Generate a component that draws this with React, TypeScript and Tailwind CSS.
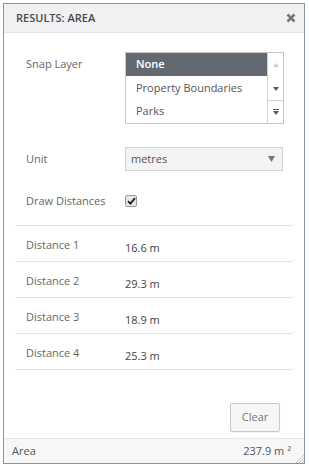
import React from "react";

const font = { fontFamily: '"Open Sans", "Noto Sans", sans-serif' };

function Close() {
  return (
    <svg width="10" height="10" viewBox="0 0 10 10">
      <path d="M1.5 1.5 L8.5 8.5 M8.5 1.5 L1.5 8.5" stroke="#777" strokeWidth="2.6" strokeLinecap="butt" />
    </svg>
  );
}

export default function App() {
  const rows = [
    ["Distance 1", "16.6 m"],
    ["Distance 2", "29.3 m"],
    ["Distance 3", "18.9 m"],
    ["Distance 4", "25.3 m"],
  ];
  return (
    <div className="w-[309px] h-[468px] bg-white p-[3px]" style={font}>
      <div className="w-[302px] h-[461px] border border-[#8595a4] flex flex-col bg-white">
        {/* header */}
        <div className="h-[29px] shrink-0 bg-[#f0f1f3] border-b border-[#e2e4e7] flex items-center justify-between pl-[12px] pr-[8px]">
          <span className="text-[11px] font-semibold text-[#4a4a4a]">RESULTS: AREA</span>
          <Close />
        </div>
        {/* body */}
        <div className="flex-1 flex flex-col pt-[19px]">
          {/* snap layer */}
          <div className="flex pl-[22px]">
            <div className="w-[99px] h-[24px] flex items-center text-[11px] text-[#666]">Snap Layer</div>
            <div className="w-[159px] h-[72px] border border-[#c6c6c6] flex">
              <div className="flex-1 flex flex-col text-[11px]">
                <div className="h-[24px] bg-[#636970] text-white font-semibold flex items-center pl-[10px]">None</div>
                <div className="h-[24px] text-[#555] flex items-center pl-[10px]">Property Boundaries</div>
                <div className="h-[24px] text-[#555] flex items-center pl-[10px]">Parks</div>
              </div>
              <div className="w-[16px] border-l border-[#d0d0d0] flex flex-col">
                <div className="h-[24px] flex items-center justify-center">
                  <svg width="6" height="4" viewBox="0 0 6 4"><path d="M0 4 L3 0 L6 4Z" fill="#cfcfcf" /></svg>
                </div>
                <div className="h-[24px] flex items-center justify-center border-b border-[#d0d0d0]">
                  <svg width="6" height="4" viewBox="0 0 6 4"><path d="M0 0 L6 0 L3 4Z" fill="#555" /></svg>
                </div>
                <div className="flex-1 flex items-center justify-center">
                  <svg width="6" height="6" viewBox="0 0 6 6"><path d="M0 0 H6 V1 H0Z M0 2 L6 2 L3 6Z" fill="#555" /></svg>
                </div>
              </div>
            </div>
          </div>
          {/* unit */}
          <div className="flex pl-[22px] mt-[23px]">
            <div className="w-[99px] h-[24px] flex items-center text-[11px] text-[#666]">Unit</div>
            <div className="w-[158px] h-[24px] border border-[#d3d3d3] bg-[#f3f3f3] flex items-center justify-between pl-[5px] pr-[7px]">
              <span className="text-[11px] text-[#555]">metres</span>
              <svg width="7" height="6" viewBox="0 0 7 6"><path d="M0 0 L7 0 L3.5 6Z" fill="#777" /></svg>
            </div>
          </div>
          {/* draw distances */}
          <div className="flex pl-[22px] mt-[18px] items-center h-[24px]">
            <div className="w-[99px] text-[11px] text-[#666]">Draw Distances</div>
            <div className="w-[12px] h-[12px] border border-[#9a9a9a] rounded-[2px] bg-[#e6e6e6] flex items-center justify-center">
              <svg width="9" height="8" viewBox="0 0 9 8"><path d="M1 4.2 L3.4 6.6 L8 1.2" stroke="#222" strokeWidth="1.8" fill="none" /></svg>
            </div>
          </div>
          {/* distances */}
          <div className="mx-[11px] mt-[12px] border-t border-[#e4e4e4]">
            {rows.map(([l, v]) => (
              <div key={l} className="h-[36px] border-b border-[#e4e4e4] flex pl-[11px] text-[11px]">
                <div className="w-[99px] pt-[11px] text-[#666]">{l}</div>
                <div className="pt-[14px] text-[#444]">{v}</div>
              </div>
            ))}
          </div>
          <div className="flex-1" />
          <div className="flex justify-end pr-[24px] pb-[6px]">
            <div className="w-[50px] h-[29px] border border-[#c9c9c9] rounded-[2px] bg-[#f6f6f6] shadow-[0_1px_1px_rgba(0,0,0,0.05)] flex items-center justify-center text-[11px] text-[#777]">Clear</div>
          </div>
        </div>
        {/* footer */}
        <div className="h-[25px] shrink-0 border-t border-[#e6e6e6] bg-[#f7f7f7] flex items-center justify-between pl-[8px] pr-[13px] relative text-[11px] text-[#555]">
          <span>Area</span>
          <span>237.9 m ²</span>
          <svg className="absolute right-0 bottom-0" width="9" height="9" viewBox="0 0 9 9">
            <path d="M9 1 L1 9 M9 4 L4 9 M9 7 L7 9" stroke="#c8c8c8" strokeWidth="1" />
          </svg>
        </div>
      </div>
    </div>
  );
}
